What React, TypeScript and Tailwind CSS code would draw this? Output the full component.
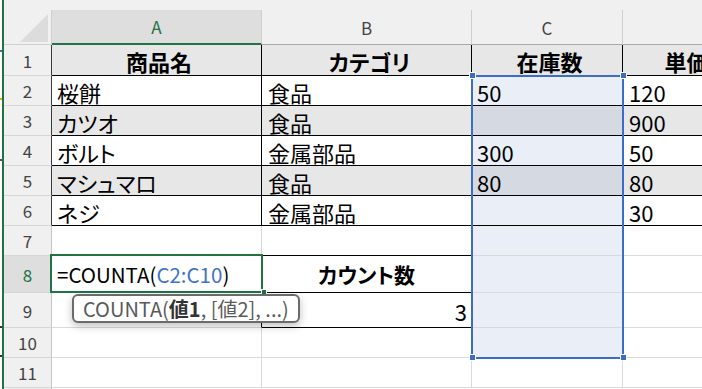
import clsx from 'clsx';

type RowDef = { n: number; vals: string[]; bold?: boolean; stripe?: boolean };

const DATA: RowDef[] = [
  { n: 1, vals: ['商品名', 'カテゴリ', '在庫数', '単価'], bold: true, stripe: true },
  { n: 2, vals: ['桜餅', '食品', '50', '120'] },
  { n: 3, vals: ['カツオ', '食品', '', '900'], stripe: true },
  { n: 4, vals: ['ボルト', '金属部品', '300', '50'] },
  { n: 5, vals: ['マシュマロ', '食品', '80', '80'], stripe: true },
  { n: 6, vals: ['ネジ', '金属部品', '', '30'] },
];

function RowHead({ n, active, dark }: { n?: number; active?: boolean; dark?: boolean }) {
  return (
    <div
      className={clsx(
        'flex items-center justify-center border-r border-b border-b-[#d6d6d6] text-[17px] leading-none',
        active ? 'bg-[#dedede] text-[#217346]' : 'bg-[#f0f0f0] text-[#444444]',
        dark ? 'border-r-[#3a3a3a]' : 'border-r-[#c6c6c6]'
      )}
    >
      {n}
    </div>
  );
}

function ColHead({ label, active }: { label: string; active?: boolean }) {
  return (
    <div
      className={clsx(
        'flex items-center justify-center border-r border-r-[#cfcfcf] text-[17px] leading-none',
        active
          ? 'bg-[#dedede] text-[#217346] border-b-2 border-b-[#217346]'
          : 'bg-[#f0f0f0] text-[#444444] border-b border-b-[#a8a8a8]'
      )}
    >
      {label}
    </div>
  );
}

// Empty sheet cell with ordinary gridlines
function Blank({ sel }: { sel?: boolean }) {
  return <div className={clsx('border-r border-b border-[#dadada]', sel ? 'bg-[#eaeef7]' : 'bg-white')} />;
}

export default function App() {
  return (
    <div className="flex w-[702px] h-[389px] overflow-hidden bg-white font-['Noto_Sans_CJK_JP',sans-serif] [font-feature-settings:'palt'] text-black">
      {/* window edge with stray marks */}
      <div className="flex flex-col w-[2px] shrink-0 bg-white">
        <div className="h-[2px] mt-[50px] bg-[#4a6fa5]" />
        <div className="h-[2px] mt-[46px] bg-[#d9b300]" />
        <div className="h-[2px] mt-[59px] bg-[#4a5568]" />
        <div className="h-[2px] mt-[165px] bg-[#333]" />
        <div className="h-[2px] mt-[27px] bg-[#333]" />
      </div>
      <div className="w-[2px] shrink-0 bg-[#217346]" />

      <div className="relative flex-1 overflow-hidden">
        <div className="grid grid-cols-[48px_210px_210px_151px_122px] grid-rows-[10px_35px_31px_30px_30px_30px_30px_30px_30px_37px_35px_30px_30px_4px]">
          {/* strip above the column letters */}
          <div className="col-span-5 bg-[#f0f0f0]" />

          {/* select-all corner */}
          <div className="flex items-end justify-end pr-[3px] pb-[2px] bg-[#f0f0f0] border-r border-r-[#cfcfcf] border-b border-b-[#d0d0d0]">
            <svg width="28" height="28" viewBox="0 0 28 28">
              <polygon points="0,28 28,28 28,0" fill="#dcdcdc" />
            </svg>
          </div>
          <ColHead label="A" active />
          <ColHead label="B" />
          <ColHead label="C" />
          <ColHead label="" />

          {DATA.map((r) => {
            const base = 'flex items-center border-r border-b border-black text-[22px] leading-none whitespace-nowrap overflow-hidden';
            const rowBg = r.stripe ? 'bg-[#e7e7e7]' : 'bg-white';
            const selBg = r.n === 1 ? 'bg-[#e7e7e7]' : r.stripe ? 'bg-[#d4d9e2]' : 'bg-[#eaeef7]';
            const align = r.bold ? 'justify-center font-bold' : '';
            return (
              <div key={r.n} className="contents">
                <RowHead n={r.n} dark />
                <div className={clsx(base, rowBg, align, 'pl-[5px] pt-[2px]')}>{r.vals[0]}</div>
                <div className={clsx(base, rowBg, align, 'pl-[6px] pt-[2px]')}>{r.vals[1]}</div>
                <div className={clsx(base, selBg, align, 'pl-[5px] pt-[2px]')}>{r.vals[2]}</div>
                <div className={clsx(base, rowBg, align, 'pl-[6px] pt-[2px]')}>{r.vals[3]}</div>
              </div>
            );
          })}

          {/* row 7 */}
          <RowHead n={7} />
          <div className="bg-white border-r border-r-[#dadada] border-b border-b-[#dadada]" />
          <div className="bg-white border-r border-r-[#dadada] border-b border-b-black" />
          <Blank sel />
          <Blank />

          {/* row 8 */}
          <RowHead n={8} active />
          <div className="flex items-center pl-[5px] pt-[1px] bg-white border-r border-r-black border-b border-b-[#dadada] text-[20.5px] leading-none whitespace-nowrap">
            <span>=COUNTA(</span>
            <span className="text-[#3f72c9]">C2:C10</span>
            <span>)</span>
          </div>
          <div className="flex items-center justify-center pt-[1px] bg-white border-r border-b border-black text-[21px] font-bold leading-none">
            カウント数
          </div>
          <Blank sel />
          <Blank />

          {/* row 9 */}
          <RowHead n={9} />
          <div className="bg-white border-r border-r-black border-b border-b-[#dadada]" />
          <div className="flex items-center justify-end pr-[4px] pt-[2px] bg-white border-r border-b border-black text-[22px] leading-none">
            3
          </div>
          <Blank sel />
          <Blank />

          {/* rows 10 and 11 */}
          <RowHead n={10} />
          <Blank />
          <Blank />
          <Blank sel />
          <Blank />

          <RowHead n={11} />
          <Blank />
          <Blank />
          <Blank />
          <Blank />

          <div className="bg-[#f0f0f0] border-r border-r-[#c6c6c6]" />
          <div className="bg-white" />
          <div className="bg-white" />
          <div className="bg-white" />
          <div className="bg-white" />
        </div>

        {/* active cell A8 */}
        <div className="absolute left-[46px] top-[254px] w-[213px] h-[39px] border-2 border-[#217346]" />
        <div className="absolute left-[257px] top-[289px] w-[6px] h-[6px] bg-[#217346] border border-white" />

        {/* range C2:C10 */}
        <div className="absolute left-[467px] top-[75px] w-[153px] h-[284px] border-2 border-[#3b6dc7]" />
        <div className="absolute left-[465px] top-[72px] w-[7px] h-[7px] bg-[#3b6dc7] border border-white" />
        <div className="absolute left-[616px] top-[72px] w-[7px] h-[7px] bg-[#3b6dc7] border border-white" />
        <div className="absolute left-[465px] top-[354px] w-[7px] h-[7px] bg-[#3b6dc7] border border-white" />
        <div className="absolute left-[616px] top-[354px] w-[7px] h-[7px] bg-[#3b6dc7] border border-white" />

        {/* function signature tooltip */}
        <div className="absolute left-[68px] top-[294px] w-[228px] h-[29px] flex items-center pl-[9px] bg-white border-2 border-[#6b6b6b] rounded-[6px] shadow-[0_3px_8px_rgba(0,0,0,0.25)] text-[20px] leading-none text-[#5a5a5a] whitespace-nowrap">
          <span>COUNTA(</span>
          <span className="font-bold text-[#333]">値1</span>
          <span>, [値2], ...)</span>
        </div>
      </div>
    </div>
  );
}
